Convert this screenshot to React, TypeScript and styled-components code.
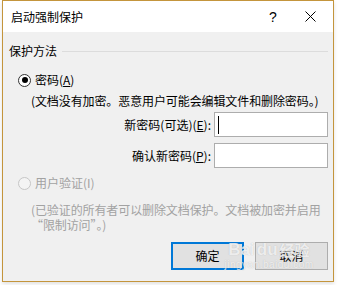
import React from "react";
import styled, { createGlobalStyle } from "styled-components";

const GlobalStyle = createGlobalStyle`
  html, body {
    margin: 0;
    padding: 0;
    background: #ffffff;
  }
  body {
    font-family: "Noto Sans CJK SC", "Noto Sans", "Liberation Sans", sans-serif;
    font-size: 12px;
    color: #000;
  }
`;

const Page = styled.div`
  width: 338px;
  height: 285px;
  padding-left: 2px;
  box-sizing: border-box;
`;

const Dialog = styled.div`
  position: relative;
  width: 332px;
  height: 282px;
  box-sizing: border-box;
  border: 1px solid #c4953c;
  background: #f0f0f0;
  box-shadow: 0 2px 4px rgba(0, 0, 0, 0.12);
  display: flex;
  flex-direction: column;
`;

const TitleBar = styled.div`
  height: 31px;
  background: #ffffff;
  display: flex;
  align-items: center;
  padding-left: 8px;
`;

const Title = styled.div`
  flex: 1;
  line-height: 14px;
`;

const TitleButton = styled.div<{ $w: number }>`
  width: ${(p) => p.$w}px;
  height: 31px;
  display: flex;
  align-items: center;
  justify-content: center;
  font-family: "Liberation Sans", sans-serif;
  font-size: 14px;
`;

const Body = styled.div`
  flex: 1;
  display: flex;
  flex-direction: column;
  padding: 12px 5px 0 6px;
`;

const GroupHeader = styled.div`
  display: flex;
  align-items: center;
  gap: 5px;
  height: 14px;
  line-height: 14px;
`;

const GroupLine = styled.div`
  flex: 1;
  height: 1px;
  background: #dcdcdc;
  margin-top: 1px;
`;

const RadioRow = styled.div<{ $top: number; $disabled?: boolean }>`
  display: flex;
  align-items: center;
  gap: 4px;
  margin-top: ${(p) => p.$top}px;
  padding-left: 9px;
  height: 14px;
  line-height: 14px;
  color: ${(p) => (p.$disabled ? "#a2a2a2" : "#000")};
`;

const RadioCircle = styled.span<{ $checked?: boolean; $disabled?: boolean }>`
  width: 11px;
  height: 11px;
  border-radius: 50%;
  border: 1px solid ${(p) => (p.$disabled ? "#c6c6c6" : "#333")};
  background: ${(p) => (p.$disabled ? "#f4f4f4" : "#fff")};
  display: flex;
  align-items: center;
  justify-content: center;
  flex-shrink: 0;
  &::after {
    content: "";
    display: ${(p) => (p.$checked ? "block" : "none")};
    width: 6px;
    height: 6px;
    border-radius: 50%;
    background: #000;
  }
`;

const Note = styled.div<{ $top: number; $muted?: boolean }>`
  margin-top: ${(p) => p.$top}px;
  padding-left: 22px;
  line-height: 15px;
  white-space: nowrap;
  letter-spacing: -0.1px;
  color: ${(p) => (p.$muted ? "#a2a2a2" : "#000")};
`;

const FieldRow = styled.div<{ $top: number }>`
  display: flex;
  align-items: center;
  justify-content: flex-end;
  gap: 3px;
  margin-top: ${(p) => p.$top}px;
`;

const FieldLabel = styled.label`
  line-height: 14px;
  white-space: nowrap;
`;

const Input = styled.div<{ $focused?: boolean }>`
  width: 114px;
  height: 25px;
  box-sizing: border-box;
  border: 1px solid #adadad;
  background: #fff;
  display: flex;
  align-items: center;
  padding-left: 3px;
  &::before {
    content: "";
    display: ${(p) => (p.$focused ? "block" : "none")};
    width: 1px;
    height: 18px;
    background: #000;
  }
`;

const Buttons = styled.div`
  display: flex;
  justify-content: flex-end;
  gap: 11px;
  margin-top: 10px;
`;

const Button = styled.div<{ $primary?: boolean }>`
  width: 73px;
  height: 28px;
  box-sizing: border-box;
  border: ${(p) => (p.$primary ? "2px solid #0078d7" : "1px solid #adadad")};
  background: #e1e1e1;
  display: flex;
  align-items: center;
  justify-content: center;
  line-height: 14px;
`;

const Watermark = styled.div`
  position: absolute;
  left: 218px;
  top: 240px;
  width: 96px;
  display: flex;
  flex-direction: column;
  align-items: center;
  color: rgba(255, 255, 255, 0.75);
  text-shadow: 0 0 1px rgba(150, 150, 150, 0.6);
  pointer-events: none;
`;

const MarkTop = styled.div`
  display: flex;
  align-items: center;
  gap: 2px;
  font-family: "Liberation Sans", sans-serif;
  font-weight: bold;
  font-size: 17px;
  line-height: 18px;
`;

const MarkCn = styled.span`
  font-family: "Noto Sans CJK SC", sans-serif;
  font-size: 15px;
  font-weight: bold;
`;

const MarkUrl = styled.div`
  font-family: "Liberation Sans", sans-serif;
  font-size: 10px;
  line-height: 11px;
  letter-spacing: 0.5px;
`;

export default function App() {
  return (
    <>
      <GlobalStyle />
      <Page>
        <Dialog>
          <TitleBar>
            <Title>启动强制保护</Title>
            <TitleButton $w={28}>?</TitleButton>
            <TitleButton $w={46}>
              <svg width="11" height="11" viewBox="0 0 11 11">
                <path d="M0.5 0.5 L10.5 10.5 M10.5 0.5 L0.5 10.5" stroke="#000" strokeWidth="1" />
              </svg>
            </TitleButton>
          </TitleBar>
          <Body>
            <GroupHeader>
              保护方法
              <GroupLine />
            </GroupHeader>
            <RadioRow $top={15}>
              <RadioCircle $checked />
              <span>
                密码(<u>A</u>)
              </span>
            </RadioRow>
            <Note $top={6}>(文档没有加密。恶意用户可能会编辑文件和删除密码。)</Note>
            <FieldRow $top={4}>
              <FieldLabel>
                新密码(可选)(<u>E</u>):
              </FieldLabel>
              <Input $focused />
            </FieldRow>
            <FieldRow $top={6}>
              <FieldLabel>
                确认新密码(<u>P</u>):
              </FieldLabel>
              <Input />
            </FieldRow>
            <RadioRow $top={8} $disabled>
              <RadioCircle $disabled />
              <span>用户验证(I)</span>
            </RadioRow>
            <Note $top={12} $muted>
              (已验证的所有者可以删除文档保护。文档被加密并启用
              <br />
              “限制访问”。)
            </Note>
            <Buttons>
              <Button $primary>确定</Button>
              <Button>取消</Button>
            </Buttons>
          </Body>
          <Watermark>
            <MarkTop>
              Bai
              <span>du</span>
              <MarkCn>经验</MarkCn>
            </MarkTop>
            <MarkUrl>jingyan.baidu.com</MarkUrl>
          </Watermark>
        </Dialog>
      </Page>
    </>
  );
}
